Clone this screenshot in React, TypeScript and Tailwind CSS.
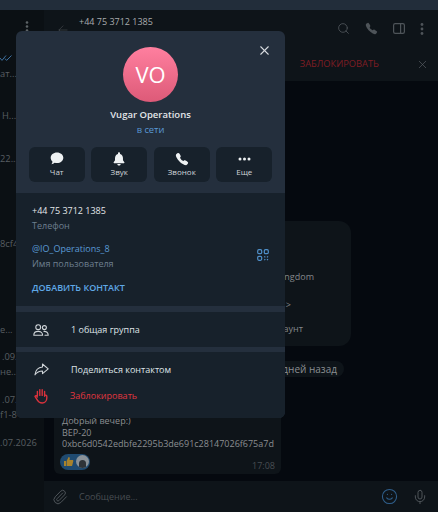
import React from 'react';
import { Search, X, ArrowLeft, Paperclip, Mic, Smile } from 'lucide-react';
import { IoCall } from 'react-icons/io5';

const ActionButton = ({ label, icon }: { label: string; icon: React.ReactNode }) => (
  <div className="flex h-[35px] w-[56px] flex-col items-center rounded-md bg-[#17212b] pt-[4px]">
    <div className="flex h-[15px] items-center justify-center">{icon}</div>
    <span className="text-[8px] leading-[11px] text-[#cfd4d8]">{label}</span>
  </div>
);

const ProfileModal = () => (
  <div className="absolute left-[16px] top-[31px] flex h-[387px] w-[269px] flex-col overflow-hidden rounded-md bg-[#242f3d]">
    <div className="relative flex h-[162px] flex-col items-center pt-[16px]">
      <X className="absolute right-[13px] top-[12px] text-[#d5d9dd]" size={15} strokeWidth={1.7} />
      <div className="flex h-[55px] w-[55px] items-center justify-center rounded-full bg-gradient-to-b from-[#ff7f9f] to-[#dd5a78] text-[22px] font-normal text-white">
        VO
      </div>
      <div className="mt-[5px] text-[9.5px] font-semibold leading-[16px] text-[#e3e6e9]">Vugar Operations</div>
      <div className="text-[9.3px] leading-[14px] text-[#5a9ad6]">в сети</div>
      <div className="mt-[10px] flex gap-[6.5px]">
        <ActionButton
          label="Чат"
          icon={
            <svg width="14" height="13" viewBox="0 0 15 14" fill="#eef1f3">
              <path d="M7.5 0.5C11.4 0.5 14.3 3 14.3 6.2 14.3 9.4 11.4 11.9 7.5 11.9 6.6 11.9 5.8 11.8 5 11.5 4 12.4 2.8 13 1.5 13.2 2.2 12.3 2.6 11.3 2.6 10.3 1.4 9.3.7 7.8.7 6.2.7 3 3.6.5 7.5.5Z" />
            </svg>
          }
        />
        <ActionButton
          label="Звук"
          icon={
            <svg width="12" height="14" viewBox="0 0 13 15" fill="#eef1f3">
              <path d="M6.5 0.2C7.2 0.2 7.6 0.7 7.6 1.4V2C9.6 2.5 10.8 4.2 10.8 6.4V8.8L12.3 11C12.6 11.5 12.3 12 11.8 12H1.2C.7 12 .4 11.5.7 11L2.2 8.8V6.4C2.2 4.2 3.4 2.5 5.4 2V1.4C5.4.7 5.8.2 6.5.2Z" />
              <path d="M4.7 12.8H8.3C8.2 13.9 7.5 14.6 6.5 14.6 5.5 14.6 4.8 13.9 4.7 12.8Z" />
            </svg>
          }
        />
        <ActionButton label="Звонок" icon={<IoCall size={14} color="#eef1f3" />} />
        <ActionButton
          label="Еще"
          icon={
            <svg width="13" height="4" viewBox="0 0 13 4" fill="#eef1f3">
              <circle cx="2" cy="2" r="1.5" />
              <circle cx="6.5" cy="2" r="1.5" />
              <circle cx="11" cy="2" r="1.5" />
            </svg>
          }
        />
      </div>
    </div>

    <div className="relative h-[113px] bg-[#17212b] pl-[16px] pt-[10px] text-[9px]">
      <div className="leading-[15px] text-[#e3e6e9]">+44 75 3712 1385</div>
      <div className="leading-[15px] text-[#6d7f8f]">Телефон</div>
      <div className="mt-[8px] leading-[15px] text-[#5a9ad6]">@IO_Operations_8</div>
      <div className="leading-[15px] text-[#6d7f8f]">Имя пользователя</div>
      <div className="mt-[9px] font-semibold leading-[15px] text-[#5fa8e6]">ДОБАВИТЬ КОНТАКТ</div>
      <svg className="absolute right-[16px] top-[56px]" width="12" height="12" viewBox="0 0 12 12" fill="none" stroke="#4f8fc9" strokeWidth="1.2">
        <rect x="0.7" y="0.7" width="4" height="4" rx="1.2" />
        <rect x="7.3" y="0.7" width="4" height="4" rx="1.2" />
        <rect x="0.7" y="7.3" width="4" height="4" rx="1.2" />
        <path d="M7.3 7.3l1 1M11 7.3l-1 1M7.3 11.2l1-1M11 11.2l-1-1" />
      </svg>
    </div>

    <div className="mt-[6px] flex h-[35px] items-center bg-[#17212b] pl-[17px] text-[9px] text-[#dfe3e7]">
      <svg width="16" height="12" viewBox="0 0 16 12" fill="none" stroke="#cfd4d8" strokeWidth="1.1" strokeLinecap="round">
        <circle cx="5.2" cy="3.2" r="2.4" />
        <circle cx="11.4" cy="3.6" r="2" />
        <path d="M.8 11.2C.8 8.6 2.6 7.4 5.2 7.4S9.6 8.6 9.6 11.2H.8M11 7.4C13.4 7.3 15.2 8.6 15.2 11.2H12" />
      </svg>
      <span className="ml-[22px]">1 общая группа</span>
    </div>

    <div className="mt-[5px] flex-1 bg-[#17212b] pl-[18px] pt-[9px] text-[9px]">
      <div className="flex h-[17px] items-center text-[#dfe3e7]">
        <svg width="15" height="13" viewBox="0 0 15 13" fill="none" stroke="#cfd4d8" strokeWidth="1.1" strokeLinejoin="round">
          <path d="M8.5 1l5.7 4.8-5.7 4.8V8C5.2 8 3 9 1 11.8 1.4 7.6 4 4.4 8.5 4Z" />
        </svg>
        <span className="ml-[22px]">Поделиться контактом</span>
      </div>
      <div className="mt-[9px] flex h-[17px] items-center text-[#e0363f]">
        <svg width="14" height="16" viewBox="0 0 14 16" fill="none" stroke="#d9323c" strokeWidth="1.4" strokeLinecap="round" strokeLinejoin="round">
          <path d="M3.4 8V3.4M5.8 7.4V1.6M8.2 7.4V1.8M10.6 8V3.4M12.8 8.5V10C12.8 13 10.8 15 8.2 15 5.8 15 4.4 14 3.3 12L1 8.4C1.6 7.4 2.8 7.6 3.4 9M10.6 8.2C10.9 6.6 12.8 6.8 12.8 8.5" />
        </svg>
        <span className="ml-[22px]">Заблокировать</span>
      </div>
    </div>
  </div>
);

export default function App() {
  return (
    <div className="relative flex h-[512px] w-[438px] flex-col overflow-hidden bg-[#05090f] font-['Open_Sans',sans-serif]">
      <div className="h-[10px] bg-[#222d3a]" />
      <div className="flex flex-1">
        <div className="w-[44px] bg-[#0b1014] text-[9.3px] text-[#585e62]">
          <div className="flex h-[37px] justify-end pr-[15px] pt-[11px]">
            <svg width="4" height="11" viewBox="0 0 4 11" fill="#5d6367">
              <circle cx="2" cy="1.5" r="1.3" />
              <circle cx="2" cy="5.5" r="1.3" />
              <circle cx="2" cy="9.5" r="1.3" />
            </svg>
          </div>
          <svg className="mt-[8px] block" width="13" height="6" viewBox="0 0 13 6" fill="none" stroke="#3d6f9e" strokeWidth="1">
            <path d="M0 3l2 2.4L6 .5M5 3.6l1.6 1.8L11.5.5" />
          </svg>
          <div className="mt-[6px] leading-[14px]">ат...</div>
          <div className="mt-[28px] pl-[2px] leading-[14px]">Н...</div>
          <div className="mt-[29px] leading-[14px]">22...</div>
          <div className="mt-[71px] leading-[14px]">8cf4</div>
          <div className="mt-[72px] leading-[14px]">е...</div>
          <div className="mt-[13px] pl-[2px] leading-[14px]">.09.</div>
          <div className="mt-[1px] leading-[14px]">не...</div>
          <div className="mt-[14px] pl-[2px] leading-[14px]">.07.</div>
          <div className="mt-[1px] leading-[14px]">f1-8</div>
          <div className="mt-[14px] leading-[14px] whitespace-nowrap">.07.2026</div>
        </div>

        <div className="flex flex-1 flex-col">
          <div className="flex h-[37px] items-center bg-[#0e1419] pl-[12px] pr-[14px]">
            <ArrowLeft size={14} strokeWidth={1} className="mt-[2px] text-[#4b5055]" />
            <div className="ml-[9px] -mt-[13px] text-[9px] text-[#a8abae]">+44 75 3712 1385</div>
            <div className="ml-auto flex items-center gap-[15px] text-[#4e5459]">
              <Search size={13} strokeWidth={1.6} />
              <IoCall size={13} />
              <svg width="12" height="11" viewBox="0 0 12 11" fill="none" stroke="currentColor" strokeWidth="1.2">
                <rect x="0.6" y="0.6" width="10.8" height="9.8" rx="1.6" />
                <path d="M7.6 0.6V10.4" />
              </svg>
              <svg width="4" height="12" viewBox="0 0 4 12" fill="currentColor">
                <circle cx="2" cy="1.5" r="1.4" />
                <circle cx="2" cy="6" r="1.4" />
                <circle cx="2" cy="10.5" r="1.4" />
              </svg>
            </div>
          </div>
          <div className="flex h-[34px] items-center justify-end bg-[#0e1419] pr-[9px] text-[9.3px] font-medium text-[#7f1d24]">
            <span>ЗАБЛОКИРОВАТЬ</span>
            <X size={13} strokeWidth={1.2} className="ml-[37px] text-[#5c6267]" />
          </div>

          <div className="flex flex-1 flex-col pl-[10px]">
            <div className="mt-[140px] h-[125px] w-[297px] rounded-xl bg-[#0e1419] pl-[150px] text-[9px] text-[#85888b]">
              <div className="pt-[49px] pr-[37px] text-right leading-[14px]">United Kingdom</div>
              <div className="mt-[14px] pr-[60px] text-right leading-[14px]">&gt;</div>
              <div className="mt-[10px] pr-[48px] text-right leading-[14px]">аккаунт</div>
            </div>
            <div className="mt-[15px] flex h-[16px] w-[290px] items-center justify-end rounded-full bg-[#0e1419] pr-[7px] text-[10px] text-[#8b8e91]">
              10 дней назад
            </div>
            <div className="relative mt-[6px] h-[91px] w-[227px] rounded-md bg-[#0e1419] pl-[8px] pt-[32px] text-[9px] leading-[11.5px] text-[#8b8e91]">
              <div>Добрый вечер:)</div>
              <div>BEP-20</div>
              <div>0xbc6d0542edbfe2295b3de691c28147026f675a7d</div>
              <div className="-ml-[2px] mt-[4px] flex h-[16px] w-[30px] items-center gap-[2px] rounded-full bg-[#1f4a70] pl-[3px]">
                <svg width="11" height="11" viewBox="0 0 11 11" fill="#a8822c">
                  <path d="M1 5h2v5H1zM3.6 5l2-4c1 0 1.4.8 1.2 1.6L6.5 4H9.4c.8 0 1.1.7.9 1.3L9.2 9.4c-.1.4-.5.6-.9.6H3.6Z" />
                </svg>
                <span className="flex h-[13px] w-[13px] items-end justify-center overflow-hidden rounded-full bg-[#8a9299]">
                  <span className="h-[8px] w-[7px] rounded-t-full bg-[#2e3338]" />
                </span>
              </div>
              <span className="absolute bottom-[2px] right-[6px] text-[9px] leading-[12px] text-[#484d52]">17:08</span>
            </div>
          </div>

          <div className="flex h-[31px] items-center bg-[#0e1419] pl-[8px] pr-[10px] text-[#4e5459]">
            <Paperclip size={16} strokeWidth={1.5} />
            <span className="ml-[11px] text-[9px] text-[#484d52]">Сообщение...</span>
            <Smile size={17} strokeWidth={1.5} className="ml-auto text-[#2f5f8c]" />
            <Mic size={16} strokeWidth={1.5} className="ml-[14px]" />
          </div>
        </div>
      </div>
      <ProfileModal />
    </div>
  );
}
